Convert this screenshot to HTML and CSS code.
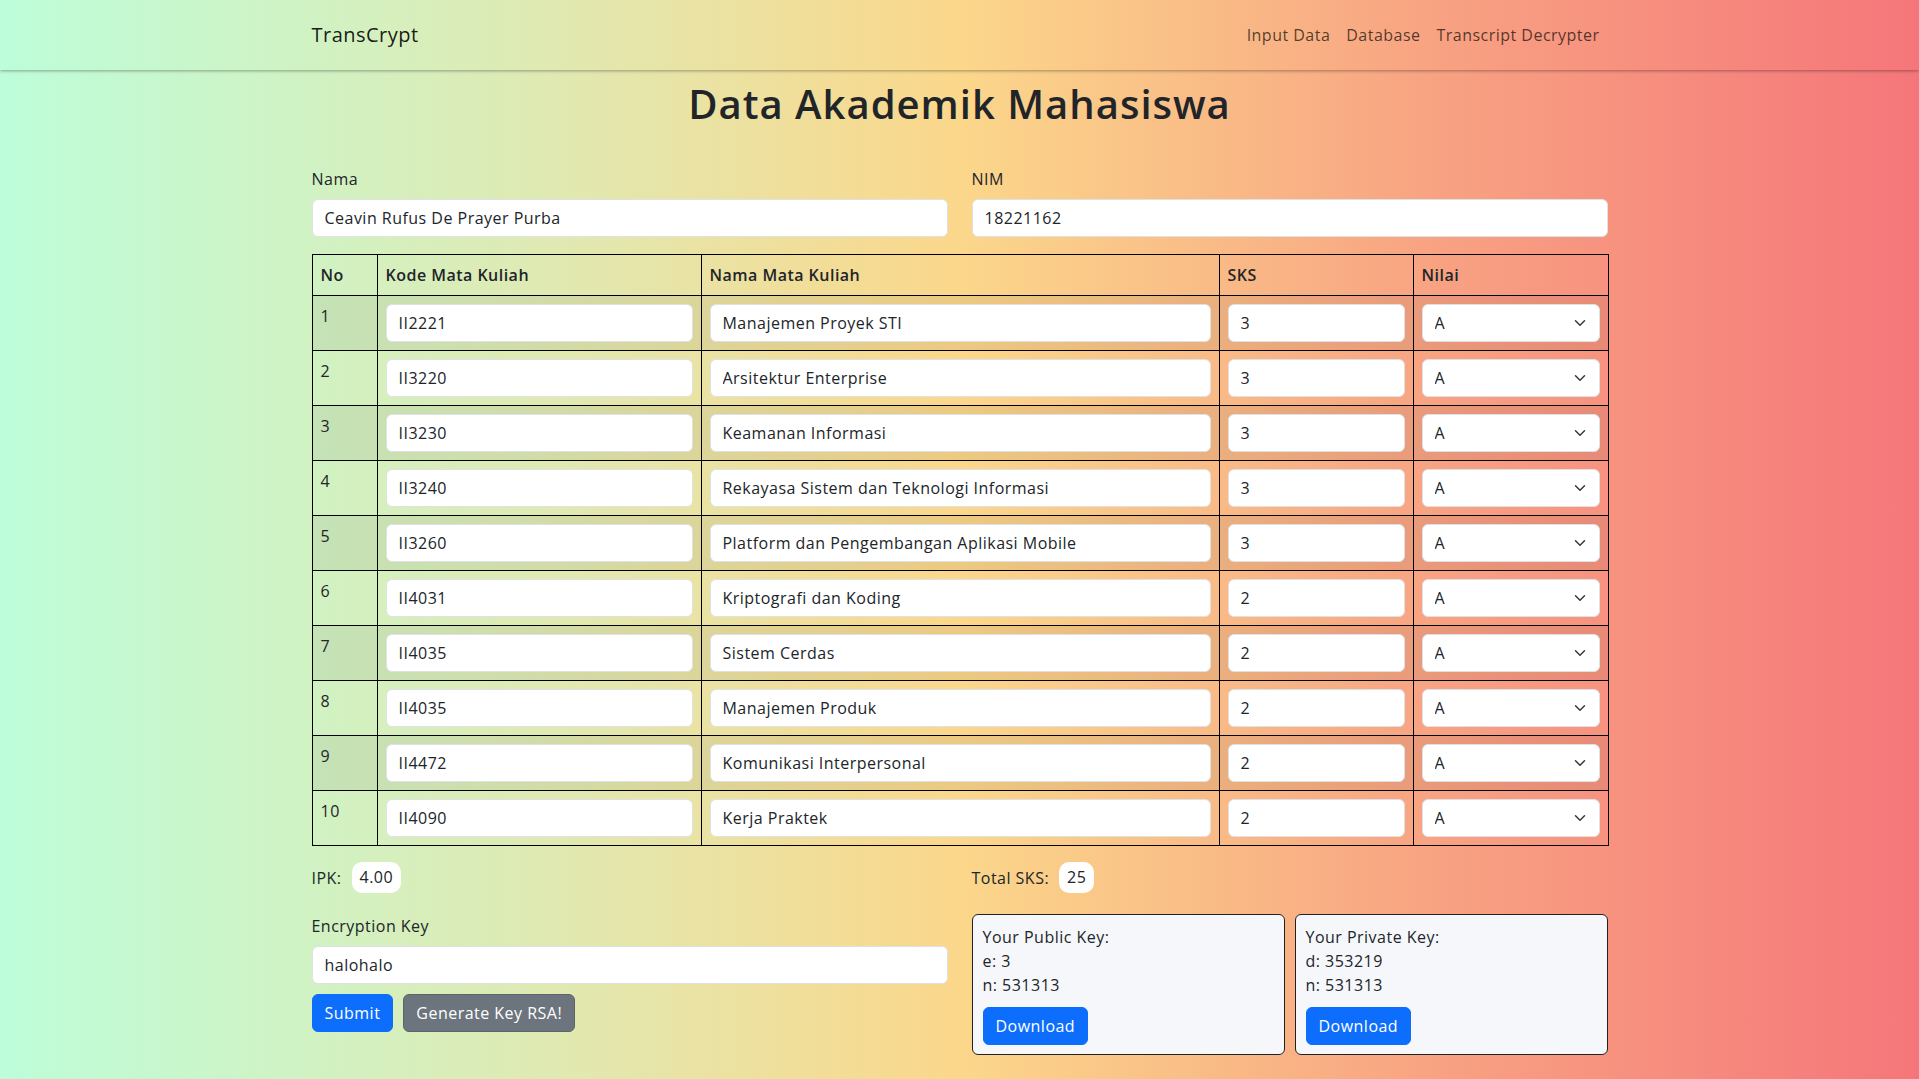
FILE: index.html
```html
<!DOCTYPE html>
<html lang="id">
<head>
<meta charset="utf-8">
<title>TransCrypt</title>
<link rel="stylesheet" href="styles.css">
</head>
<body>
<nav class="navbar">
  <div class="container nav-inner">
    <a class="brand" href="#">TransCrypt</a>
    <ul class="nav-links">
      <li><a href="#">Input Data</a></li>
      <li><a href="#">Database</a></li>
      <li><a href="#">Transcript Decrypter</a></li>
    </ul>
  </div>
</nav>
<main class="container">
  <h1 class="title">Data Akademik Mahasiswa</h1>
  <div class="row fields">
    <div class="col">
      <label class="label">Nama</label>
      <input class="input" type="text" value="Ceavin Rufus De Prayer Purba">
    </div>
    <div class="col">
      <label class="label">NIM</label>
      <input class="input" type="text" value="18221162">
    </div>
  </div>

  <table class="grades">
    <colgroup>
      <col class="c-no"><col class="c-kode"><col class="c-nama"><col class="c-sks"><col class="c-nilai">
    </colgroup>
    <thead>
      <tr><th>No</th><th>Kode Mata Kuliah</th><th>Nama Mata Kuliah</th><th>SKS</th><th>Nilai</th></tr>
    </thead>
    <tbody>
      <tr><td>1</td><td><input class="input" value="II2221"></td><td><input class="input" value="Manajemen Proyek STI"></td><td><input class="input" value="3"></td><td><div class="select-wrap"><select class="select"><option>A</option></select><svg class="chev" viewBox="0 0 16 16"><path d="m2 5 6 6 6-6"/></svg></div></td></tr>
      <tr><td>2</td><td><input class="input" value="II3220"></td><td><input class="input" value="Arsitektur Enterprise"></td><td><input class="input" value="3"></td><td><div class="select-wrap"><select class="select"><option>A</option></select><svg class="chev" viewBox="0 0 16 16"><path d="m2 5 6 6 6-6"/></svg></div></td></tr>
      <tr><td>3</td><td><input class="input" value="II3230"></td><td><input class="input" value="Keamanan Informasi"></td><td><input class="input" value="3"></td><td><div class="select-wrap"><select class="select"><option>A</option></select><svg class="chev" viewBox="0 0 16 16"><path d="m2 5 6 6 6-6"/></svg></div></td></tr>
      <tr><td>4</td><td><input class="input" value="II3240"></td><td><input class="input" value="Rekayasa Sistem dan Teknologi Informasi"></td><td><input class="input" value="3"></td><td><div class="select-wrap"><select class="select"><option>A</option></select><svg class="chev" viewBox="0 0 16 16"><path d="m2 5 6 6 6-6"/></svg></div></td></tr>
      <tr><td>5</td><td><input class="input" value="II3260"></td><td><input class="input" value="Platform dan Pengembangan Aplikasi Mobile"></td><td><input class="input" value="3"></td><td><div class="select-wrap"><select class="select"><option>A</option></select><svg class="chev" viewBox="0 0 16 16"><path d="m2 5 6 6 6-6"/></svg></div></td></tr>
      <tr><td>6</td><td><input class="input" value="II4031"></td><td><input class="input" value="Kriptografi dan Koding"></td><td><input class="input" value="2"></td><td><div class="select-wrap"><select class="select"><option>A</option></select><svg class="chev" viewBox="0 0 16 16"><path d="m2 5 6 6 6-6"/></svg></div></td></tr>
      <tr><td>7</td><td><input class="input" value="II4035"></td><td><input class="input" value="Sistem Cerdas"></td><td><input class="input" value="2"></td><td><div class="select-wrap"><select class="select"><option>A</option></select><svg class="chev" viewBox="0 0 16 16"><path d="m2 5 6 6 6-6"/></svg></div></td></tr>
      <tr><td>8</td><td><input class="input" value="II4035"></td><td><input class="input" value="Manajemen Produk"></td><td><input class="input" value="2"></td><td><div class="select-wrap"><select class="select"><option>A</option></select><svg class="chev" viewBox="0 0 16 16"><path d="m2 5 6 6 6-6"/></svg></div></td></tr>
      <tr><td>9</td><td><input class="input" value="II4472"></td><td><input class="input" value="Komunikasi Interpersonal"></td><td><input class="input" value="2"></td><td><div class="select-wrap"><select class="select"><option>A</option></select><svg class="chev" viewBox="0 0 16 16"><path d="m2 5 6 6 6-6"/></svg></div></td></tr>
      <tr><td>10</td><td><input class="input" value="II4090"></td><td><input class="input" value="Kerja Praktek"></td><td><input class="input" value="2"></td><td><div class="select-wrap"><select class="select"><option>A</option></select><svg class="chev" viewBox="0 0 16 16"><path d="m2 5 6 6 6-6"/></svg></div></td></tr>
    </tbody>
  </table>

  <div class="row summary">
    <div class="col stat"><span>IPK:</span><span class="badge">4.00</span></div>
    <div class="col stat"><span>Total SKS:</span><span class="badge">25</span></div>
  </div>

  <div class="row bottom">
    <div class="col">
      <label class="label">Encryption Key</label>
      <input class="input" type="text" value="halohalo">
      <div class="actions">
        <button class="btn btn-primary">Submit</button>
        <button class="btn btn-secondary">Generate Key RSA!</button>
      </div>
    </div>
    <div class="col keys">
      <div class="key-card">
        <p>Your Public Key:</p>
        <p>e: 3</p>
        <p>n: 531313</p>
        <button class="btn btn-primary">Download</button>
      </div>
      <div class="key-card">
        <p>Your Private Key:</p>
        <p>d: 353219</p>
        <p>n: 531313</p>
        <button class="btn btn-primary">Download</button>
      </div>
    </div>
  </div>
</main>
</body>
</html>
```

FILE: styles.css
```css
* { box-sizing: border-box; }

html, body {
  margin: 0;
  min-height: 100%;
}

body {
  font-family: "Open Sans", "Noto Sans", sans-serif;
  font-size: 16px;
  line-height: 1.5;
  letter-spacing: 0.03em;
  color: #212529;
  background: linear-gradient(to right, #bdfdd9 0%, #dfeab3 28%, #fbd78b 50%, #f8a282 75%, #f5767a 100%);
  min-height: 1079px;
}

.container {
  width: 1296px;
  margin: 0 auto;
}

.navbar {
  height: 70px;
  box-shadow: 0 1px 3px rgba(0, 0, 0, 0.35);
}

.nav-inner {
  height: 70px;
  display: flex;
  align-items: center;
  justify-content: space-between;
}

.brand {
  font-size: 20px;
  color: rgba(0, 0, 0, 0.9);
  text-decoration: none;
}

.nav-links {
  list-style: none;
  display: flex;
  margin: 0;
  padding: 0;
}

.nav-links a {
  display: block;
  padding: 8px;
  color: rgba(0, 0, 0, 0.68);
  text-decoration: none;
}

.title {
  margin: 10px 0 0;
  font-size: 40px;
  line-height: 48px;
  font-weight: 600;
  letter-spacing: 0.025em;
  text-align: center;
  color: #212529;
}

.row {
  display: flex;
  gap: 24px;
}

.col {
  flex: 1 1 0;
  min-width: 0;
}

.fields {
  margin-top: 39px;
}

.label {
  display: block;
  margin-bottom: 8px;
}

.input,
.select {
  display: block;
  width: 100%;
  height: 38px;
  padding: 6px 12px;
  font: inherit;
  letter-spacing: inherit;
  color: #212529;
  background: #fff;
  border: 1px solid #dee2e6;
  border-radius: 6px;
  outline: none;
}

.grades {
  width: 1296px;
  margin-top: 17px;
  border-collapse: collapse;
  table-layout: fixed;
  border: 1px solid #000;
}

.c-no { width: 65px; }
.c-kode { width: 324px; }
.c-nama { width: 518px; }
.c-sks { width: 194px; }
.c-nilai { width: 195px; }

.grades th,
.grades td {
  border: 1px solid #000;
  padding: 8px;
  text-align: left;
  vertical-align: top;
}

.grades th {
  font-weight: 600;
}

.grades tbody tr:nth-child(odd) td {
  background: rgba(0, 0, 0, 0.06);
}

.select-wrap {
  position: relative;
}

.select {
  appearance: none;
  -webkit-appearance: none;
}

.chev {
  position: absolute;
  right: 12px;
  top: 13px;
  width: 16px;
  height: 12px;
  fill: none;
  stroke: #343a40;
  stroke-width: 2;
  stroke-linecap: round;
  stroke-linejoin: round;
  pointer-events: none;
}

.summary {
  margin-top: 16px;
}

.stat {
  display: flex;
  align-items: center;
  gap: 10px;
}

.badge {
  display: inline-block;
  background: #fff;
  border-radius: 10px;
  padding: 3px 8px;
  line-height: 25px;
}

.bottom {
  margin-top: 21px;
}

.actions {
  display: flex;
  gap: 10px;
  margin-top: 10px;
}

.btn {
  height: 38px;
  padding: 6px 12px;
  font: inherit;
  letter-spacing: inherit;
  border-radius: 6px;
  border: 1px solid transparent;
  cursor: pointer;
}

.btn-primary {
  background: #0d6efd;
  border-color: #0d6efd;
  color: #fff;
}

.btn-secondary {
  background: #6c757d;
  border-color: #5c636a;
  color: #fff;
}

.keys {
  display: flex;
  gap: 10px;
}

.key-card {
  flex: 1 1 0;
  min-width: 0;
  height: 141px;
  padding: 10px;
  background: #f6f7fb;
  border: 1px solid #222;
  border-radius: 6px;
}

.key-card p {
  margin: 0;
}

.key-card .btn {
  margin-top: 10px;
}
```
